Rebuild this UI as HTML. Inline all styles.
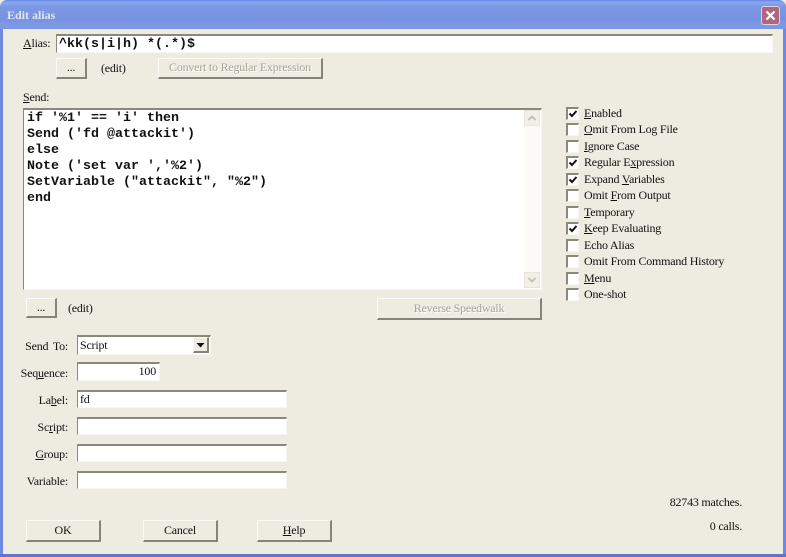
<!DOCTYPE html>
<html><head><meta charset="utf-8"><style>
html,body{margin:0;padding:0;background:#eeebe0}
#w{position:relative;width:786px;height:557px;overflow:hidden;background:#eeebe0;font:12px/14px "Liberation Serif",serif;color:#111;letter-spacing:-.22px}
#w div{position:absolute;box-sizing:border-box;white-space:nowrap}
u{text-decoration:underline}
.tb{left:0;top:0;width:786px;height:29px;background:linear-gradient(#5f83e6 0,#8aa6ee 2px,#7b97e2 7px,#7893e0 20px,#7e9ae6 26px,#7a95dd 29px);border-radius:7px 7px 0 0}
.ttl{left:7px;top:8px;font:bold 12px/14px "Liberation Serif",serif;color:#dfe6f7;letter-spacing:0}
.x{left:761px;top:6px;width:19px;height:19px;border-radius:3px;background:#b0667f;border:1px solid #d8d2e2;color:#fff}
.e{background:#fff;border:1px solid;border-color:#8b887a #f8f6f0 #f8f6f0 #8b887a;border-top-width:2px}
.b{background:#eeebe0;border:1px solid;border-color:#fbfaf6 #85837a #85837a #fbfaf6;border-right-width:2px;border-bottom-width:2px;text-align:center;line-height:17px}
.g{color:#a5a297;text-shadow:1px 1px 0 #fff}
.m{font:bold 13.33px/16px "Liberation Mono",monospace;color:#111;letter-spacing:0}
.c{left:566px;width:13px;height:13px;background:#fff;border:1px solid;border-color:#8b887a #f8f6f0 #f8f6f0 #8b887a;border-top-width:2px;border-left-width:2px}
.c svg{position:absolute;left:0;top:0}
.l{left:584px}
.r{text-align:right;width:60px;left:8px}
</style></head><body><div id="w">
<div class="tb"></div>
<div class="ttl">Edit alias</div>
<div class="x"><svg width="17" height="17" style="position:absolute;left:0;top:0"><path d="M4.500 4.500L12.500 12.500M12.500 4.500L4.500 12.500" stroke="#fff" stroke-width="2.200" fill="none"/></svg></div>
<div style="left:0;top:29px;width:3px;height:528px;background:#7088e0"></div>
<div style="left:783px;top:29px;width:3px;height:528px;background:#7088e0"></div>
<div style="left:0;top:554px;width:786px;height:3px;background:#5f74cc"></div>

<div style="left:23px;top:36px"><u>A</u>lias:</div>
<div class="e m" style="left:56px;top:34px;width:717px;height:19px;padding-left:2px;padding-top:1px;line-height:16px">^kk(s|i|h) *(.*)$</div>
<div class="b" style="left:56px;top:58px;width:31px;height:21px">...</div>
<div style="left:101px;top:61px">(edit)</div>
<div class="b g" style="left:158px;top:58px;width:165px;height:21px">Convert to Regular Expression</div>

<div style="left:23px;top:90px"><u>S</u>end:</div>
<div class="e" style="left:23px;top:108px;width:519px;height:182px"></div>
<div class="m" style="left:27px;top:111px">if '%1' == 'i' then<br>Send ('fd @attackit')<br>else<br>Note ('set var ','%2')<br>SetVariable ("attackit", "%2")<br>end</div>
<div style="left:524px;top:110px;width:16px;height:178px;background:#fbfaf6"></div>
<div style="left:524px;top:110px;width:16px;height:16px;background:#f1efe6;border:1px solid #e8e6dc"><svg width="14" height="14" style="position:absolute;left:0;top:0"><path d="M3.500 9L7 5.500L10.500 9" stroke="#c4c3b8" stroke-width="2" fill="none"/></svg></div>
<div style="left:524px;top:272px;width:16px;height:16px;background:#f1efe6;border:1px solid #e8e6dc"><svg width="14" height="14" style="position:absolute;left:0;top:0"><path d="M3.500 5L7 8.500L10.500 5" stroke="#c4c3b8" stroke-width="2" fill="none"/></svg></div>

<div class="b" style="left:26px;top:298px;width:31px;height:20px">...</div>
<div style="left:68px;top:301px">(edit)</div>
<div class="b g" style="left:377px;top:298px;width:165px;height:22px;line-height:19px">Reverse Speedwalk</div>

<div class="r" style="top:339px;word-spacing:2px">Send To:</div>
<div class="e" style="left:77px;top:335px;width:134px;height:20px;padding-left:2px;line-height:17px">Script</div>
<div class="b" style="left:193px;top:337px;width:16px;height:16px"><svg width="13" height="13" style="position:absolute;left:0;top:0"><path d="M2.500 5H10.500L6.500 9.500Z" fill="#111"/></svg></div>
<div style="left:20px;top:366px;width:48px;text-align:right">Se<span>q</span><u>u</u>ence:</div>
<div class="e" style="left:77px;top:362px;width:83px;height:19px;text-align:right;padding-right:3px;line-height:15px">100</div>
<div class="r" style="top:393px">La<u>b</u>el:</div>
<div class="e" style="left:77px;top:390px;width:210px;height:18px;padding-left:2px;line-height:14px">fd</div>
<div class="r" style="top:420px">Sc<u>r</u>ipt:</div>
<div class="e" style="left:77px;top:417px;width:210px;height:18px"></div>
<div class="r" style="top:447px"><u>G</u>roup:</div>
<div class="e" style="left:77px;top:444px;width:210px;height:18px"></div>
<div class="r" style="top:474px">Variable:</div>
<div class="e" style="left:77px;top:471px;width:210px;height:18px"></div>

<div class="b" style="left:26px;top:520px;width:75px;height:22px;line-height:19px">OK</div>
<div class="b" style="left:143px;top:520px;width:75px;height:22px;line-height:19px">Cancel</div>
<div class="b" style="left:257px;top:520px;width:75px;height:22px;line-height:19px"><u>H</u>elp</div>

<div class="c" style="top:107px"><svg width="11" height="11"><path d="M1.500 4.500L4 7L8.500 2" stroke="#111" stroke-width="2" fill="none"/></svg></div>
<div class="l" style="top:106px"><u>E</u>nabled</div>
<div class="c" style="top:123px"></div>
<div class="l" style="top:122px"><u>O</u>mit From Log File</div>
<div class="c" style="top:140px"></div>
<div class="l" style="top:139px"><u>I</u>gnore Case</div>
<div class="c" style="top:156px"><svg width="11" height="11"><path d="M1.500 4.500L4 7L8.500 2" stroke="#111" stroke-width="2" fill="none"/></svg></div>
<div class="l" style="top:155px">Regular E<u>x</u>pression</div>
<div class="c" style="top:173px"><svg width="11" height="11"><path d="M1.500 4.500L4 7L8.500 2" stroke="#111" stroke-width="2" fill="none"/></svg></div>
<div class="l" style="top:172px">Expand <u>V</u>ariables</div>
<div class="c" style="top:189px"></div>
<div class="l" style="top:188px">Omit <u>F</u>rom Output</div>
<div class="c" style="top:206px"></div>
<div class="l" style="top:205px"><u>T</u>emporary</div>
<div class="c" style="top:222px"><svg width="11" height="11"><path d="M1.500 4.500L4 7L8.500 2" stroke="#111" stroke-width="2" fill="none"/></svg></div>
<div class="l" style="top:221px"><u>K</u>eep Evaluating</div>
<div class="c" style="top:239px"></div>
<div class="l" style="top:238px">Echo Alias</div>
<div class="c" style="top:255px"></div>
<div class="l" style="top:254px">Omit From Command History</div>
<div class="c" style="top:272px"></div>
<div class="l" style="top:271px"><u>M</u>enu</div>
<div class="c" style="top:288px"></div>
<div class="l" style="top:287px">One-shot</div>

<div style="left:640px;width:102px;text-align:right;top:495px">82743 matches.</div>
<div style="left:640px;width:102px;text-align:right;top:519px">0 calls.</div>
</div></body></html>
